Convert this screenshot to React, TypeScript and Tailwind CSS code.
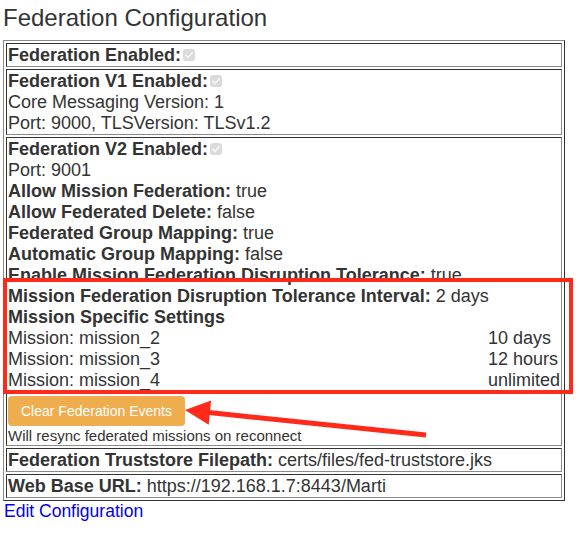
import React from 'react';

const cellClass =
  'border border-t-[#333] border-l-[#333] border-r-[#8a8a8a] border-b-[#8a8a8a] px-px pt-px text-[18px] leading-[21px]';

const Check: React.FC = () => (
  <span className="inline-block ml-[2px] w-[12px] h-[12px] rounded-[3px] bg-[#dadada] relative">
    <svg className="absolute inset-0" width="12" height="12" viewBox="0 0 12 12">
      <path d="M2.8 6.3 L5 8.5 L9.3 3.6" fill="none" stroke="#f4f4f4" strokeWidth={1.8} strokeLinecap="round" strokeLinejoin="round" />
    </svg>
  </span>
);

const Field: React.FC<{ label: string; value: string }> = ({ label, value }) => (
  <div>
    <b>{label}</b> {value}
  </div>
);

const MISSIONS = [
  { name: 'mission_2', interval: '10 days' },
  { name: 'mission_3', interval: '12 hours' },
  { name: 'mission_4', interval: 'unlimited' },
];

export default function App() {
  return (
    <div className="relative w-[581px] h-[536px] bg-white text-[#333] font-['Liberation_Sans',Arial,sans-serif] px-[3px] pt-[4px] overflow-hidden">
      <h2 className="text-[24px] leading-[28px] mb-[8px]">Federation Configuration</h2>

      <div className="w-[562px] border border-t-[#8a8a8a] border-l-[#8a8a8a] border-r-[#333] border-b-[#333] p-[2px] flex flex-col gap-[2px]">
        <div className={cellClass}>
          <b>Federation Enabled:</b>
          <Check />
        </div>

        <div className={cellClass}>
          <div>
            <b>Federation V1 Enabled:</b>
            <Check />
          </div>
          <div>Core Messaging Version: 1</div>
          <div>Port: 9000, TLSVersion: TLSv1.2</div>
        </div>

        <div className={cellClass}>
          <div>
            <b>Federation V2 Enabled:</b>
            <Check />
          </div>
          <div>Port: 9001</div>
          <Field label="Allow Mission Federation:" value="true" />
          <Field label="Allow Federated Delete:" value="false" />
          <Field label="Federated Group Mapping:" value="true" />
          <Field label="Automatic Group Mapping:" value="false" />
          <Field label="Enable Mission Federation Disruption Tolerance:" value="true" />
          <Field label="Mission Federation Disruption Tolerance Interval:" value="2 days" />
          <div className="font-bold">Mission Specific Settings</div>
          <div className="grid grid-cols-[1fr_auto]">
            {MISSIONS.map(m => (
              <React.Fragment key={m.name}>
                <div>Mission: {m.name}</div>
                <div>{m.interval}</div>
              </React.Fragment>
            ))}
          </div>
          <button className="mt-[5px] h-[30px] px-[13px] rounded-[4px] bg-[#f0ad4e] text-white text-[14px] leading-[20px]">
            Clear Federation Events
          </button>
          <div className="text-[15px] leading-[19px]">Will resync federated missions on reconnect</div>
        </div>

        <div className={cellClass}>
          <Field label="Federation Truststore Filepath:" value="certs/files/fed-truststore.jks" />
        </div>

        <div className={cellClass}>
          <Field label="Web Base URL:" value="https://192.168.1.7:8443/Marti" />
        </div>
      </div>

      <a href="#" className="block w-fit text-[17.5px] leading-[21px] text-[#0000ee] pl-px">
        Edit Configuration
      </a>

      {/* annotation overlay */}
      <svg className="absolute left-0 top-0 pointer-events-none" width="581" height="536">
        <rect x="5" y="280" width="566" height="112" fill="none" stroke="#ff2a1a" strokeWidth={4} />
        <line x1="209" y1="412.6" x2="426" y2="435" stroke="#ff2a1a" strokeWidth={5} />
        <polygon points="185,410 211.1,400.5 208.7,424.7" fill="#ff2a1a" />
      </svg>
    </div>
  );
}
